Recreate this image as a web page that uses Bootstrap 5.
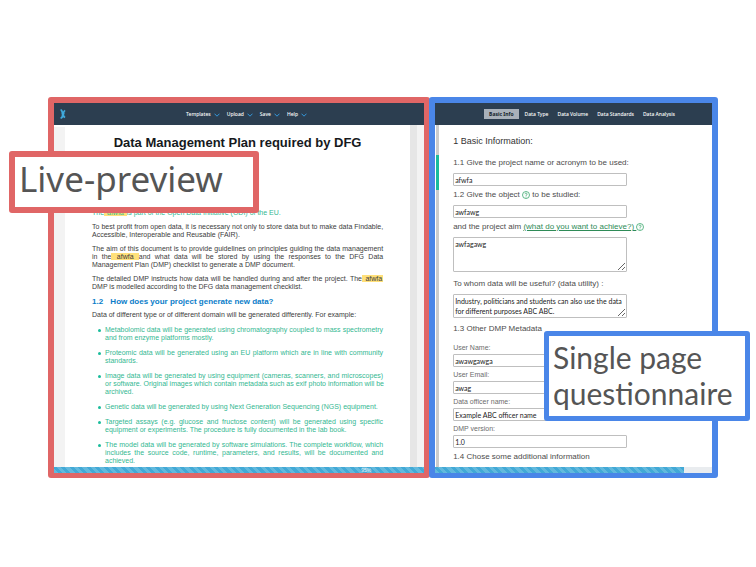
<!DOCTYPE html>
<html lang="en">
<head>
<meta charset="utf-8">
<meta name="viewport" content="width=device-width, initial-scale=1">
<title>Data Management Plan generator</title>
<link href="https://cdn.jsdelivr.net/npm/bootstrap@5.3.0/dist/css/bootstrap.min.css" rel="stylesheet">
<style>
body { background: #fff; color: #3c3c3c; font-family: "Liberation Sans", Arial, sans-serif; }
.stage { padding: 97px 38px 0 48px; }
.pane { border: 6px solid #e06666; border-bottom-width: 5px; border-radius: 3px; background: #fff; min-width: 0; }
.pane-preview { flex: 385 1 0; }
.pane-form { flex: 288 1 0; border-color: #4a86e8; margin-left: -1px; }
.topbar { background: #2c3e50; height: 22px; font: 500 5px/10px "Noto Sans", "Open Sans", sans-serif; }
.topbar a { color: #fff; text-decoration: none; }
.topbar svg { width: 6px; height: 4px; margin-left: 3px; }
.topbar .logo { width: 6px; height: 10px; margin: 0 0 0 6px; }
.menu { gap: 7px; padding-left: 3px; }
.tabs { gap: 9px; padding-left: 12px; }
.tabs .current { background: #a9b1ba; color: #111c28; font-weight: 700; padding: 0 5px; margin-right: -3px; }
.gutter { width: 11px; background: #f3f3f3; margin-top: 2px; }
.rail { width: 14px; background: #f3f3f3; border-left: 7px solid #e6e6e6; }
.doc { padding: 9px 27px 2px; font-size: 7px; line-height: 8px; min-width: 0; }
.doc h1 { font-size: 13px; line-height: 18px; font-weight: 700; color: #16191c; text-align: center; margin: 0 0 57px; white-space: nowrap; }
.doc h2 { font-size: 8px; line-height: 10px; font-weight: 700; color: #0a7dc9; margin: 0 0 4px; }
.doc h2 span { margin-right: 5px; }
.doc p { margin: 0 0 6px; }
.full { display: block; text-align: justify; text-align-last: justify; white-space: nowrap; }
.doc .teal, .doc ul { color: #34b892; }
.doc ul { margin: 0 0 0 13px; padding: 1px 0 0; list-style: none; }
.doc li { margin-bottom: 7px; }
.doc li:last-child { margin-bottom: 0; }
.doc li::before { content: ""; float: left; width: 3px; height: 3px; border-radius: 50%; background: #1abc9c; margin: 3px 0 0 -7px; }
.hl { background: #ffe07a; padding: 0 1px; }
.stripes { height: 6px; background: #e9ecef; }
.stripes div { height: 6px; background: repeating-linear-gradient(45deg, #62b9dd 0 3px, #42a9d6 3px 6px); color: #e4f4fb; font-size: 5px; line-height: 6px; }
.stripes span { margin-left: 83%; }
.track { width: 3px; margin-left: 1px; background: #ccc; padding-top: 30px; }
.track div { height: 35px; background: #1abc9c; }
.questions { padding: 11px 0 0 14px; }
.questions h3 { font-size: 9px; line-height: 10px; font-weight: 400; color: #333; margin: 0 0 12px; }
.questions .ask { display: block; font-size: 8px; line-height: 10px; color: #4c4c4c; margin: 0 0 5px; white-space: nowrap; }
.questions .group { margin-bottom: 10px; }
.questions .small-ask { display: block; font-size: 7px; line-height: 8px; color: #6c6c6c; margin: 0 0 2px; }
.questions .field { display: block; width: 67%; height: 13px; border: 1px solid #bfbfbf; border-radius: 1px; padding: 0 1px; margin: 0 0 4px; background: #fff; color: #222; font: 7px/11px Lato, "Noto Sans", sans-serif; }
.questions textarea.field { resize: vertical; padding: 1px; }
.questions .tall { height: 35px; margin-bottom: 7px; }
.questions .two { height: 24px; line-height: 10px; margin-bottom: 6px; }
.questions a { color: #2e8b57; text-decoration: underline; }
.help { width: 8px; height: 8px; vertical-align: -2px; }
.tag { position: absolute; background: #fff; color: #555; font-family: "Noto Sans", "Open Sans", sans-serif; white-space: nowrap; border-radius: 3px; }
.tag-live { left: 9px; top: 151px; border: 6px solid #e06666; padding: 0 30px 6px 4px; font-size: 35px; line-height: 44px; }
.tag-single { left: 544px; top: 331px; border: 5px solid #4a86e8; padding: 3px 12px 5px 4px; font-family: Lato, "Noto Sans", sans-serif; font-size: 30px; line-height: 36px; }
</style>
</head>
<body>
<main class="stage d-flex">
  <section class="pane pane-preview d-flex flex-column">
    <nav class="topbar d-flex align-items-center" aria-label="Document">
      <svg class="logo" viewBox="0 0 6 10" aria-hidden="true"><path d="M.6.8C2.200 1 2.400 3 2.600 5S1.900 8.800.6 9.200M5.200 1.500C3.600 2 3.500 3.500 3.300 5s.5 2.900 1.800 3.500M1.500 4.500h3" fill="none" stroke="#3fa9dc" stroke-width="1.700"/></svg>
      <div class="menu d-flex flex-grow-1 justify-content-center">
        <a href="#">Templates<svg viewBox="0 0 6 4"><path d="M.5.7 3 3.200 5.500.7" fill="none" stroke="#3498db"/></svg></a>
        <a href="#">Upload<svg viewBox="0 0 6 4"><path d="M.5.7 3 3.200 5.500.7" fill="none" stroke="#3498db"/></svg></a>
        <a href="#">Save<svg viewBox="0 0 6 4"><path d="M.5.7 3 3.200 5.500.7" fill="none" stroke="#3498db"/></svg></a>
        <a href="#">Help<svg viewBox="0 0 6 4"><path d="M.5.7 3 3.200 5.500.7" fill="none" stroke="#3498db"/></svg></a>
      </div>
    </nav>
    <div class="d-flex flex-grow-1">
      <div class="gutter flex-shrink-0"></div>
      <article class="doc flex-grow-1">
        <h1>Data Management Plan required by DFG</h1>
        <p class="teal">The<span class="hl"> afwfa </span>is part of the Open Data Initiative (ODI) of the EU.</p>
        <p><span class="full">To best profit from open data, it is necessary not only to store data but to make data Findable,</span>Accessible, Interoperable and Reusable (FAIR).</p>
        <p><span class="full">The aim of this document is to provide guidelines on principles guiding the data management</span><span class="full">in the<span class="hl"> afwfa </span>and what data will be stored by using the responses to the DFG Data</span>Management Plan (DMP) checklist to generate a DMP document.</p>
        <p><span class="full">The detailed DMP instructs how data will be handled during and after the project. The<span class="hl"> afwfa </span></span>DMP is modelled according to the DFG data management checklist.</p>
        <h2><span>1.2</span> How does your project generate new data?</h2>
        <p>Data of different type or of different domain will be generated differently. For example:</p>
        <ul>
          <li><span class="full">Metabolomic data will be generated using chromatography coupled to mass spectrometry</span>and from enzyme platforms mostly.</li>
          <li><span class="full">Proteomic data will be generated using an EU platform which are in line with community</span>standards.</li>
          <li><span class="full">Image data will be generated by using equipment (cameras, scanners, and microscopes)</span><span class="full">or software. Original images which contain metadata such as exif photo information will be</span>archived.</li>
          <li>Genetic data will be generated by using Next Generation Sequencing (NGS) equipment.</li>
          <li><span class="full">Targeted assays (e.g. glucose and fructose content) will be generated using specific</span>equipment or experiments. The procedure is fully documented in the lab book.</li>
          <li><span class="full">The model data will be generated by software simulations. The complete workflow, which</span><span class="full">includes the source code, runtime, parameters, and results, will be documented and</span>achieved.</li>
        </ul>
      </article>
      <div class="rail flex-shrink-0"></div>
    </div>
    <div class="stripes"><div><span>95%</span></div></div>
  </section>

  <section class="pane pane-form d-flex flex-column">
    <nav class="topbar tabs d-flex align-items-center justify-content-center" aria-label="Sections">
      <a class="current" href="#">Basic Info</a>
      <a href="#">Data Type</a>
      <a href="#">Data Volume</a>
      <a href="#">Data Standards</a>
      <a href="#">Data Analysis</a>
    </nav>
    <div class="d-flex flex-grow-1">
      <div class="track flex-shrink-0"><div></div></div>
      <form class="questions flex-grow-1">
        <h3>1 Basic Information:</h3>
        <label class="ask" for="acronym">1.1 Give the project name or acronym to be used:</label>
        <input class="field" id="acronym" type="text" value="afwfa">
        <label class="ask" for="object">1.2 Give the object <svg class="help" viewBox="0 0 8 8"><circle cx="4" cy="4" r="3.500" fill="none" stroke="#3aa76d" stroke-width=".8"/><path d="M2.900 3.200C3 1.800 5.200 1.900 5.100 3.200 5 3.900 4 3.900 4 4.900M4 5.600v.8" fill="none" stroke="#3aa76d" stroke-width=".8"/></svg> to be studied:</label>
        <input class="field" id="object" type="text" value="awfawg">
        <label class="ask" for="aim">and the project aim <a href="#">(what do you want to achieve?) </a><svg class="help" viewBox="0 0 8 8"><circle cx="4" cy="4" r="3.500" fill="none" stroke="#3aa76d" stroke-width=".8"/><path d="M2.900 3.200C3 1.800 5.200 1.900 5.100 3.200 5 3.900 4 3.900 4 4.900M4 5.600v.8" fill="none" stroke="#3aa76d" stroke-width=".8"/></svg></label>
        <textarea class="field tall" id="aim">awfagawg</textarea>
        <label class="ask" for="utility">To whom data will be useful? (data utility) :</label>
        <textarea class="field two" id="utility">Industry, politicians and students can also use the data for different purposes ABC ABC.</textarea>
        <div class="ask group">1.3 Other DMP Metadata</div>
        <label class="small-ask" for="user">User Name:</label>
        <input class="field" id="user" type="text" value="awawgawga">
        <label class="small-ask" for="email">User Email:</label>
        <input class="field" id="email" type="text" value="awag">
        <label class="small-ask" for="officer">Data officer name:</label>
        <input class="field" id="officer" type="text" value="Example ABC officer name">
        <label class="small-ask" for="version">DMP version:</label>
        <input class="field" id="version" type="text" value="1.0">
        <div class="ask">1.4 Chose some additional information</div>
      </form>
    </div>
    <div class="stripes"><div style="width:90%"></div></div>
  </section>
</main>
<div class="tag tag-live">Live-preview</div>
<div class="tag tag-single">Single page<br>questionnaire</div>
<script src="https://cdn.jsdelivr.net/npm/bootstrap@5.3.0/dist/js/bootstrap.bundle.min.js"></script>
</body>
</html>
